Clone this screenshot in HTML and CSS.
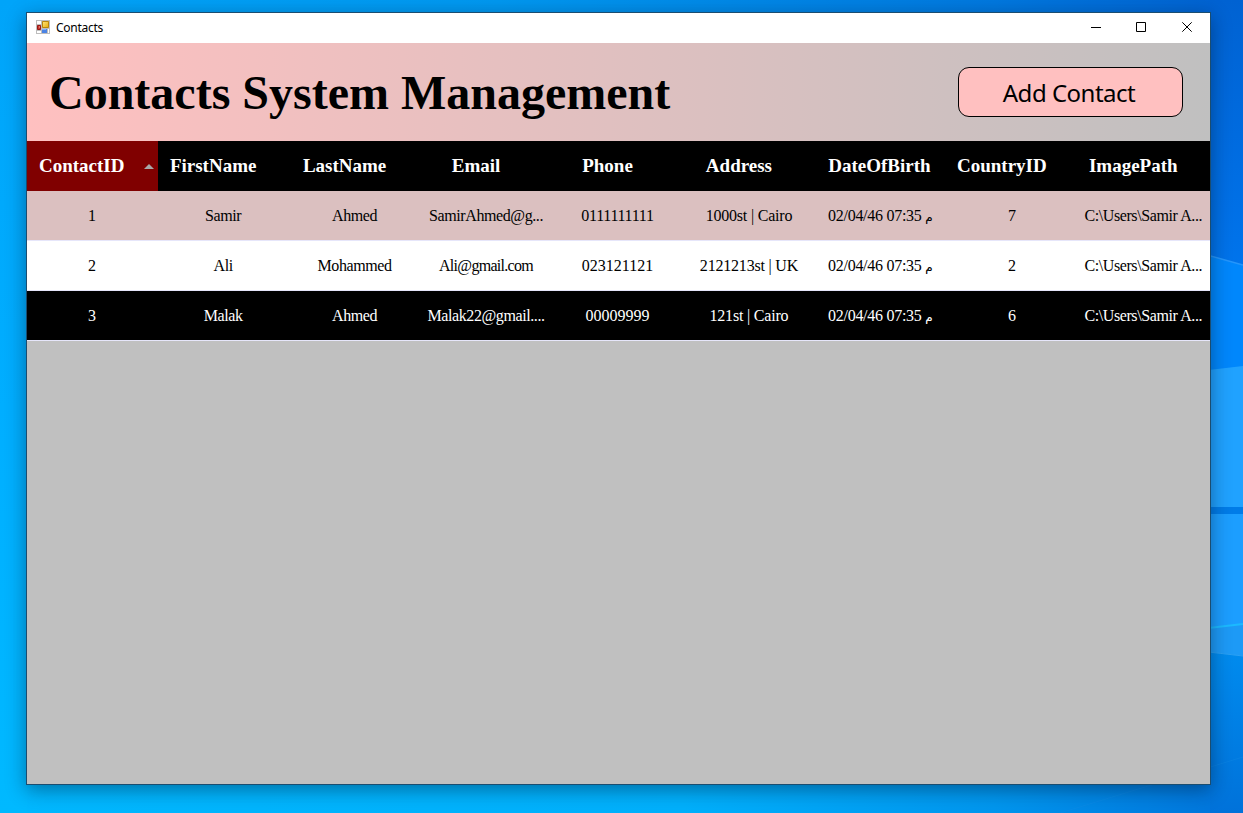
FILE: index.html
```html
<!DOCTYPE html>
<html lang="en">
<head>
<meta charset="utf-8">
<title>Contacts</title>
<link rel="stylesheet" href="styles.css">
</head>
<body>
<div class="desktop">
  <svg class="wallpaper" viewBox="0 0 1243 813" aria-hidden="true">
    <defs>
      <linearGradient id="top" x1="0" x2="1" y1="0" y2="0"><stop offset="0" stop-color="#00a5fa"/><stop offset=".4" stop-color="#0098f0"/><stop offset=".8" stop-color="#0078df"/><stop offset="1" stop-color="#0060d0"/></linearGradient>
      <linearGradient id="left" x1="0" x2="0" y1="0" y2="1"><stop offset="0" stop-color="#00a4f9"/><stop offset=".5" stop-color="#00aeff"/><stop offset="1" stop-color="#00b9ff"/></linearGradient>
      <linearGradient id="bottom" x1="0" x2="1" y1="0" y2="0"><stop offset="0" stop-color="#00b8ff"/><stop offset=".55" stop-color="#00b0fc"/><stop offset=".8" stop-color="#0096ee"/><stop offset="1" stop-color="#0072da"/></linearGradient>
      <linearGradient id="sky" x1="0" x2="0" y1="0" y2="1"><stop offset="0" stop-color="#0062d2"/><stop offset="1" stop-color="#0074ec"/></linearGradient>
      <linearGradient id="low" x1="0" x2="0" y1="0" y2="1"><stop offset="0" stop-color="#008bee"/><stop offset="1" stop-color="#0072da"/></linearGradient>
    </defs>
    <rect width="1243" height="400" fill="url(#top)"/>
    <rect y="400" width="1243" height="413" fill="url(#bottom)"/>
    <rect width="27" height="813" fill="url(#left)"/>
    <rect x="1210" y="0" width="33" height="270" fill="url(#sky)"/>
    <path d="M1200 253L1243 265V380H1200Z" fill="#0087fc"/>
    <path d="M1200 253L1243 265" stroke="#2596fb" stroke-width="1.5"/>
    <path d="M1200 371L1243 366V507H1200Z" fill="#20a2ff"/>
    <path d="M1200 507H1243V514H1200Z" fill="#007ce8"/>
    <path d="M1200 514H1243V625L1200 630Z" fill="#1c9eff"/>
    <path d="M1200 629L1243 624V656L1200 651Z" fill="#1d9af6"/>
    <path d="M1200 629L1243 624" stroke="#1cbaff" stroke-width="2"/>
    <path d="M1210 652L1243 656V813H1210Z" fill="url(#low)"/>
    <path d="M1200 651L1243 656" stroke="#2ba1f4"/>
    <path d="M1060 813L1243 757" stroke="#168ce6" opacity=".35"/>
  </svg>
  <main class="window">
    <div class="titlebar">
      <svg class="app-icon" width="14" height="14" viewBox="0 0 14 14">
        <defs><linearGradient id="gold" x2="1" y2="1"><stop stop-color="#ffe77b"/><stop offset="1" stop-color="#e8aa0b"/></linearGradient></defs>
        <path d="M0 0H14V14H0Z" fill="#bdbdbd"/>
        <path d="M1 1H5V4H1ZM1 11H5V13H1ZM12 9H13V13H12Z" fill="#fff"/>
        <path d="M6.500 1.500H12.500V7.500H6.500Z" fill="url(#gold)" stroke="#b9850c"/>
        <path d="M1.500 5.500H4.500V9.500H1.500Z" fill="#c93830" stroke="#971713"/>
        <path d="M3 7H4" stroke="#ffb5a5"/>
        <path d="M6 9H11V13H6Z" fill="#4b83e4"/><path d="M6 9.500H10" stroke="#83b1fa"/>
      </svg>
      <span class="caption">Contacts</span>
      <svg class="controls" width="104" height="12" viewBox="0 0 104 12" fill="none" stroke="#000"><path d="M1 6.500H11M46.500 1.500H55.500V10.500H46.500ZM92.300 1.300L101.700 10.700M101.700 1.300L92.300 10.700"/></svg>
    </div>
    <header class="banner">
      <h1 class="heading">Contacts System Management</h1>
      <button class="add">Add Contact</button>
    </header>
    <div class="grid">
      <div class="row head">
        <span class="cell sorted"><b class="label">ContactID</b><svg class="arrow" width="10" height="5" viewBox="0 0 10 5"><path d="M0 5L5 0L10 5Z" fill="#a8a8a8"/></svg></span><span class="cell"><b class="label">FirstName</b></span><span class="cell"><b class="label">LastName</b></span><span class="cell"><b class="label">Email</b></span><span class="cell"><b class="label">Phone</b></span><span class="cell"><b class="label">Address</b></span><span class="cell wide"><b class="label">DateOfBirth</b></span><span class="cell"><b class="label">CountryID</b></span><span class="cell"><b class="label">ImagePath</b></span>
      </div>
      <div class="row rose"><span class="cell">1</span><span class="cell">Samir</span><span class="cell">Ahmed</span><span class="cell">SamirAhmed@g...</span><span class="cell phone-long">0111111111</span><span class="cell address">1000st | Cairo</span><span class="cell date">02/04/46 07:35 <i class="pm">م</i></span><span class="cell">7</span><span class="cell">C:\Users\Samir A...</span></div>
      <div class="row white"><span class="cell">2</span><span class="cell">Ali</span><span class="cell">Mohammed</span><span class="cell email">Ali@gmail.com</span><span class="cell phone">023121121</span><span class="cell address">2121213st | UK</span><span class="cell date">02/04/46 07:35 <i class="pm">م</i></span><span class="cell">2</span><span class="cell">C:\Users\Samir A...</span></div>
      <div class="row black"><span class="cell">3</span><span class="cell">Malak</span><span class="cell">Ahmed</span><span class="cell">Malak22@gmail....</span><span class="cell phone">00009999</span><span class="cell address">121st | Cairo</span><span class="cell date">02/04/46 07:35 <i class="pm">م</i></span><span class="cell">6</span><span class="cell">C:\Users\Samir A...</span></div>
    </div>
  </main>
</div>
</body>
</html>
```
FILE: styles.css
```css
* { box-sizing: border-box; }
body { margin: 0; }
.desktop { position: relative; width: 1243px; height: 813px; padding: 12px 32px 28px 26px; overflow: hidden; }
.wallpaper { position: absolute; inset: 0; width: 1243px; height: 813px; }
.window { position: relative; width: 1185px; height: 773px; border: 1px solid #1b4d70; background: #c0c0c0; box-shadow: 0 5px 18px rgba(0, 20, 40, .42); display: flex; flex-direction: column; }
.titlebar { height: 30px; background: #fff; display: flex; align-items: center; padding: 0 16px 0 9px; }
.app-icon { margin-top: -2px; }
.caption { font: 12px/16px "Noto Sans", sans-serif; margin-left: 6px; letter-spacing: -.28px; }
.controls { margin-left: auto; margin-top: -2px; }
.banner { height: 98px; display: flex; align-items: center; justify-content: space-between; padding: 0 27px 0 22px; background: linear-gradient(90deg, #ffc0c0, #c0c0c0); }
.heading { margin: 2px 0 0; font: bold 48px/56px "Liberation Serif", serif; white-space: nowrap; }
.add { width: 225px; height: 50px; padding: 2px 3px 0 0; border: 1px solid #000; border-radius: 11px; background: #ffc0c0; color: #000; font: 24px/32px "Noto Sans", sans-serif; letter-spacing: -.5px; }
.grid { display: flex; flex-direction: column; }
.row { height: 50px; display: grid; grid-template-columns: repeat(9, 1fr); border-bottom: 1px solid #e6e6fa; font: 16px/20px "Liberation Serif", serif; letter-spacing: -.4px; }
.cell { display: flex; align-items: center; justify-content: center; white-space: pre; min-width: 0; padding-right: 2px; }
.head { border: 0; background: #000; color: #fff; font-size: 19px; letter-spacing: 0; }
.head .cell { padding-right: 22px; }
.head .wide { padding-right: 4px; }
.head .sorted { background: maroon; position: relative; }
.arrow { position: absolute; right: 4px; top: 23px; }
.rose { background: #dbc0c0; }
.white { background: #fff; }
.black { background: #000; color: #fff; }
.email { letter-spacing: -.7px; }
.phone { letter-spacing: 0; }
.phone-long { letter-spacing: -.3px; }
.address { letter-spacing: -.2px; }
.date { letter-spacing: -.27px; }
.pm { font: 12px "DejaVu Sans", sans-serif; padding-top: 3px; }
```
